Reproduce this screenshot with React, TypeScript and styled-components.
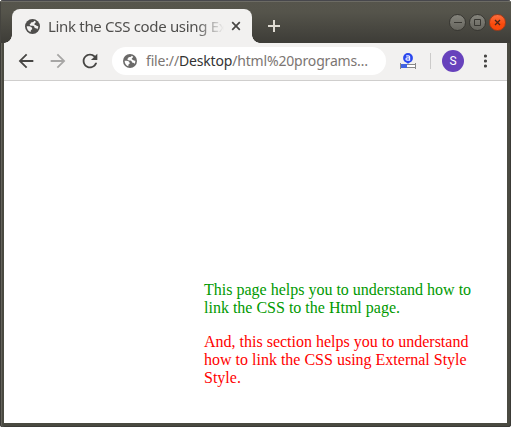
import React from "react";
import styled, { createGlobalStyle } from "styled-components";
import { MdArrowBack, MdArrowForward, MdRefresh } from "react-icons/md";

const GlobalStyle = createGlobalStyle`
  *, *::before, *::after { box-sizing: border-box; }
  html, body { margin: 0; padding: 0; background: #fff; overflow: hidden; }
`;

const Window = styled.div`
  width: 511px;
  height: 427px;
  display: flex;
  flex-direction: column;
  border-radius: 4px 4px 3px 3px;
  overflow: hidden;
  padding: 0 4px 4px;
  background: #4a4a41;
  box-shadow: inset 1px 0 #3c3b37, inset 2px 0 #64635b, inset -1px 0 #3c3b37, inset 0 -1px #3c3b37;
  font-family: "Noto Sans", "Open Sans", sans-serif;
`;

const TitleBar = styled.header`
  height: 43px;
  flex: none;
  display: flex;
  align-items: flex-end;
  margin: 0 -4px;
  padding-left: 4px;
  background: linear-gradient(#56554c 0, #55544b 12px, #3d3c37 43px);
  box-shadow: inset 0 1px #47474c, inset 0 2px #6c6b64, inset 1px 0 #45443f;
`;

const Tab = styled.div`
  position: relative;
  width: 240px;
  height: 34px;
  margin-left: 8px;
  padding: 0 10px 0 13px;
  display: flex;
  align-items: center;
  border-radius: 8px 8px 0 0;
  background: #f2f1f0;
  color: #4f4e4c;
  &::before, &::after {
    content: "";
    position: absolute;
    bottom: 0;
    width: 8px;
    height: 8px;
  }
  &::before {
    left: -8px;
    background: radial-gradient(circle at 0 0, transparent 7.5px, #f2f1f0 8px);
  }
  &::after {
    right: -8px;
    background: radial-gradient(circle at 100% 0, transparent 7.5px, #f2f1f0 8px);
  }
`;

const TabTitle = styled.span`
  width: 178px;
  height: 24px;
  margin: -1px 0 0 8px;
  white-space: nowrap;
  font-size: 15px;
  line-height: 24px;
  letter-spacing: -0.32px;
  color: #4f4e4c;
  mask-image: linear-gradient(90deg, #000 148px, transparent 176px);
`;

const Glyph = styled.svg<{ $ml?: number }>`
  display: block;
  flex: none;
  margin-left: ${(p) => p.$ml ?? 0}px;
`;

const WindowControls = styled.div`
  display: flex;
  align-self: flex-start;
  gap: 3px;
  margin: 14px 5px 0 auto;
`;

const ControlButton = styled.span<{ $close?: boolean }>`
  width: 17px;
  height: 17px;
  border-radius: 50%;
  border: 1px solid ${(p) => (p.$close ? "#a63a17" : "#383732")};
  background: ${(p) =>
    p.$close ? "linear-gradient(#fb7040, #fa4a0c 60%, #f8480a)" : "linear-gradient(#85847c, #66655e)"};
`;

const Toolbar = styled.div`
  height: 38px;
  flex: none;
  display: flex;
  align-items: center;
  padding: 0 11px 1px 11px;
  background: #f2f1f0;
  border-bottom: 1px solid #cfcecd;
`;

const NavButton = styled.span<{ $disabled?: boolean }>`
  width: 22px;
  height: 22px;
  display: flex;
  margin-right: 10px;
  color: ${(p) => (p.$disabled ? "#a7a6a5" : "#474644")};
`;

const AddressBar = styled.div`
  width: 274px;
  height: 28px;
  margin-left: 1px;
  padding-left: 11px;
  display: flex;
  align-items: center;
  border-radius: 14px;
  background: #fff;
  color: #6b6a69;
`;

const Url = styled.span`
  margin-left: 9px;
  white-space: nowrap;
  font-size: 14px;
  line-height: 22px;
  letter-spacing: -0.17px;
  color: #7b7572;
  b { font-weight: 400; color: #333; }
`;

const Divider = styled.span`
  width: 1px;
  height: 16px;
  margin: 0 11px 0 14px;
  background: #cccbca;
`;

const Avatar = styled.span`
  width: 22px;
  height: 22px;
  border-radius: 50%;
  display: grid;
  place-items: center;
  background: #6742bc;
  color: #fff;
  font: 400 12px/22px Roboto, sans-serif;
`;

const Page = styled.main`
  flex: 1;
  background: #fff;
  padding: 200px 20px 0 200px;
  font: 16px/18px "Liberation Serif", serif;
`;

const Paragraph = styled.p<{ $color: string }>`
  width: 276px;
  margin: 0 0 16px;
  color: ${(p) => p.$color};
`;

function Globe({ size, land }: { size: number; land: string }) {
  return (
    <Glyph width={size} height={size} viewBox="0 0 14 14">
      <circle cx="7" cy="7" r="7" fill="currentColor" />
      <path
        d="M8.6 1.7Q8.3 3 7 3.1L5.6 3.3Q5.4 4.6 4.3 5.1Q4.5 6.4 6 6.4H7.6Q8.7 6.5 8.8 7.8Q8.9 8.7 10 8.7Q11.3 8.8 11.3 9.9Q12.5 8.5 12.4 6.7Q10.8 6.8 9.8 5.7Q8.6 5.5 8.7 4.4Q9.8 4.1 10.2 2.6Q9.5 2 8.6 1.7Z"
        fill={land}
      />
      <path
        d="M1.6 6.8H4.1Q6.6 7.1 6.7 8.9Q7 9.8 6 10.1Q5.2 10.5 5.3 12.2Q1.8 11.1 1.6 6.8Z"
        fill={land}
      />
    </Glyph>
  );
}

export default function App() {
  return (
    <>
      <GlobalStyle />
      <Window>
        <TitleBar>
          <Tab>
            <Globe size={15} land="#f2f1f0" />
            <TabTitle>Link the CSS code using Ex</TabTitle>
            <Glyph $ml={5} width="10" height="10" viewBox="0 0 10 10">
              <path d="M1.2 1.2l7.6 7.6M8.8 1.2L1.2 8.8" stroke="#474644" strokeWidth="1.7" />
            </Glyph>
          </Tab>
          <Glyph $ml={16} width="12" height="34" viewBox="0 0 12 34">
            <path d="M6 11v12M0 17h12" stroke="#dfdbd2" strokeWidth="2" />
          </Glyph>
          <WindowControls>
            <ControlButton>
              <Glyph width="15" height="15" viewBox="0 0 15 15">
                <path d="M4 7.5h8" stroke="#383732" />
              </Glyph>
            </ControlButton>
            <ControlButton>
              <Glyph width="15" height="15" viewBox="0 0 15 15">
                <path d="M4.5 4.5h6v6h-6z" fill="none" stroke="#383732" />
              </Glyph>
            </ControlButton>
            <ControlButton $close>
              <Glyph width="15" height="15" viewBox="0 0 15 15">
                <path d="M5 5l5 5M10 5l-5 5" stroke="#4b2619" strokeWidth="1.3" />
              </Glyph>
            </ControlButton>
          </WindowControls>
        </TitleBar>
        <Toolbar>
          <NavButton><MdArrowBack size={22} /></NavButton>
          <NavButton $disabled><MdArrowForward size={22} /></NavButton>
          <NavButton><MdRefresh size={22} /></NavButton>
          <AddressBar>
            <Globe size={14} land="#fff" />
            <Url>file://<b>Desktop</b>/html%20programs…</Url>
          </AddressBar>
          <Glyph $ml={14} width="16" height="16" viewBox="0 0 16 16">
            <rect x=".5" y="11.5" width="15" height="3" fill="#fff" stroke="#888" />
            <rect x="1" y="11" width="6" height="4" fill="#4264e2" />
            <path d="M.5 10v6M15.5 10v6" stroke="#888" />
            <path d="M8 11L5.5 8h5z" fill="#2947ee" />
            <circle cx="8" cy="5" r="4.9" fill="#2947ee" />
            <path d="M6.2 2.8h2.2q1.2 0 1.2 1v3.3H7.2q-1.2 0-1.2-1.1t1.2-1.1h2.2" fill="none" stroke="#eef1ff" strokeWidth="1.2" />
          </Glyph>
          <Divider />
          <Avatar>S</Avatar>
          <Glyph $ml={20} width="4" height="14" viewBox="0 0 4 14">
            <circle cx="1.5" cy="2" r="1.6" fill="#474644" />
            <circle cx="1.5" cy="7" r="1.6" fill="#474644" />
            <circle cx="1.5" cy="12" r="1.6" fill="#474644" />
          </Glyph>
        </Toolbar>
        <Page>
          <Paragraph $color="#009900">This page helps you to understand how to link the CSS to the Html page.</Paragraph>
          <Paragraph $color="#ff0000">And, this section helps you to understand how to link the CSS using External Style Style.</Paragraph>
        </Page>
      </Window>
    </>
  );
}
